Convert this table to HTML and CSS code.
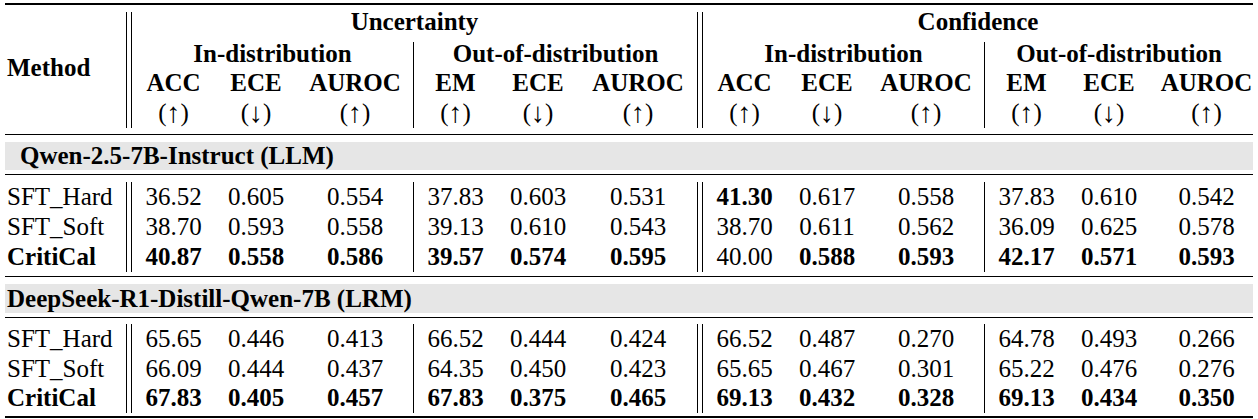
FILE: index.html
```html
<!DOCTYPE html>
<html lang="en">
<head>
<meta charset="utf-8">
<title>Calibration results</title>
<link rel="stylesheet" href="styles.css">
</head>
<body>
<div class="table">
  <div class="rule-heavy"></div>
  <div class="grid head">
    <div class="method">Method</div>
    <div class="dsep dsep-a"></div>
    <div class="grp grp-u">Uncertainty</div>
    <div class="dsep dsep-b"></div>
    <div class="grp grp-c">Confidence</div>
    <div class="sub sub-1">In-distribution</div>
    <div class="sep sep-a"></div>
    <div class="sub sub-2">Out-of-distribution</div>
    <div class="sub sub-3">In-distribution</div>
    <div class="sep sep-b"></div>
    <div class="sub sub-4">Out-of-distribution</div>

    <div class="r3">ACC</div><div class="r3">ECE</div><div class="r3">AUROC</div>
    <div class="r3">EM</div><div class="r3">ECE</div><div class="r3">AUROC</div>
    <div class="r3">ACC</div><div class="r3">ECE</div><div class="r3">AUROC</div>
    <div class="r3">EM</div><div class="r3">ECE</div><div class="r3 e">AUROC</div>

    <div class="r4 arr">(<span class="ar">↑</span>)</div><div class="r4 arr">(<span class="ar">↓</span>)</div><div class="r4 arr">(<span class="ar">↑</span>)</div>
    <div class="r4 arr">(<span class="ar">↑</span>)</div><div class="r4 arr">(<span class="ar">↓</span>)</div><div class="r4 arr">(<span class="ar">↑</span>)</div>
    <div class="r4 arr">(<span class="ar">↑</span>)</div><div class="r4 arr">(<span class="ar">↓</span>)</div><div class="r4 arr">(<span class="ar">↑</span>)</div>
    <div class="r4 arr">(<span class="ar">↑</span>)</div><div class="r4 arr">(<span class="ar">↓</span>)</div><div class="r4 arr e">(<span class="ar">↑</span>)</div>
  </div>
  <div class="rule-light"></div>

  <div class="band band-indent">Qwen-2.5-7B-Instruct (LLM)</div>
  <div class="rule-light"></div>
  <div class="grid body">
    <div class="dsep dsep-a"></div><div class="sep sep-a"></div><div class="dsep dsep-b"></div><div class="sep sep-b"></div>

    <div class="name">SFT_Hard</div>
    <div>36.52</div><div>0.605</div><div>0.554</div>
    <div>37.83</div><div>0.603</div><div>0.531</div>
    <div class="b">41.30</div><div>0.617</div><div>0.558</div>
    <div>37.83</div><div>0.610</div><div class="e">0.542</div>

    <div class="name">SFT_Soft</div>
    <div>38.70</div><div>0.593</div><div>0.558</div>
    <div>39.13</div><div>0.610</div><div>0.543</div>
    <div>38.70</div><div>0.611</div><div>0.562</div>
    <div>36.09</div><div>0.625</div><div class="e">0.578</div>

    <div class="name b">CritiCal</div>
    <div class="b">40.87</div><div class="b">0.558</div><div class="b">0.586</div>
    <div class="b">39.57</div><div class="b">0.574</div><div class="b">0.595</div>
    <div>40.00</div><div class="b">0.588</div><div class="b">0.593</div>
    <div class="b">42.17</div><div class="b">0.571</div><div class="b e">0.593</div>
  </div>
  <div class="rule-light"></div>

  <div class="band band-second">DeepSeek-R1-Distill-Qwen-7B (LRM)</div>
  <div class="rule-light"></div>
  <div class="grid body body-last">
    <div class="dsep dsep-a"></div><div class="sep sep-a"></div><div class="dsep dsep-b"></div><div class="sep sep-b"></div>

    <div class="name">SFT_Hard</div>
    <div>65.65</div><div>0.446</div><div>0.413</div>
    <div>66.52</div><div>0.444</div><div>0.424</div>
    <div>66.52</div><div>0.487</div><div>0.270</div>
    <div>64.78</div><div>0.493</div><div class="e">0.266</div>

    <div class="name">SFT_Soft</div>
    <div>66.09</div><div>0.444</div><div>0.437</div>
    <div>64.35</div><div>0.450</div><div>0.423</div>
    <div>65.65</div><div>0.467</div><div>0.301</div>
    <div>65.22</div><div>0.476</div><div class="e">0.276</div>

    <div class="name b">CritiCal</div>
    <div class="b">67.83</div><div class="b">0.405</div><div class="b">0.457</div>
    <div class="b">67.83</div><div class="b">0.375</div><div class="b">0.465</div>
    <div class="b">69.13</div><div class="b">0.432</div><div class="b">0.328</div>
    <div class="b">69.13</div><div class="b">0.434</div><div class="b e">0.350</div>
  </div>
  <div class="rule-heavy"></div>
</div>
</body>
</html>
```

FILE: styles.css
```css
html, body {
  margin: 0;
  padding: 0;
  background: #ffffff;
}

body {
  font-family: "Liberation Serif", "Times New Roman", Times, serif;
  font-size: 25px;
  color: #000000;
}

.table {
  width: 1248px;
  margin: 3px 5px 0 5px;
}

.rule-heavy {
  height: 2px;
  background: #000000;
}

.rule-light {
  height: 1px;
  background: #000000;
}

.grid {
  display: grid;
  grid-template-columns: 121px 6px 83px 82px 116px 1px 83px 82px 118px 6px 83px 82px 116px 1px 83px 82px 103px;
  text-align: center;
  white-space: nowrap;
}

/* header */
.head {
  grid-template-rows: 32px 29px 30px 30px;
  padding: 2px 0 6px 0;
  line-height: 30px;
  font-weight: bold;
}

.method {
  grid-column: 1;
  grid-row: 1 / -1;
  align-self: center;
  text-align: left;
  padding-left: 2px;
}

.dsep {
  grid-row: 1 / -1;
  border-left: 1px solid #000000;
  border-right: 1px solid #000000;
}

.dsep-a { grid-column: 2; }
.dsep-b { grid-column: 10; }

.sep {
  grid-row: 1 / -1;
  background: #000000;
}

.sep-a { grid-column: 6; }
.sep-b { grid-column: 14; }

.head .dsep {
  margin-top: 5px;
}

.head .sep {
  grid-row: 2 / -1;
  margin-top: 3px;
}

.grp { grid-row: 1; }
.grp-u { grid-column: 3 / 10; }
.grp-c { grid-column: 11 / 18; }

.sub { grid-row: 2; }
.sub-1 { grid-column: 3 / 6; }
.sub-2 { grid-column: 7 / 10; }
.sub-3 { grid-column: 11 / 14; }
.sub-4 { grid-column: 15 / 18; }

.r3 { grid-row: 3; }
.r4 { grid-row: 4; }

.arr {
  font-weight: normal;
}

.ar {
  display: inline-block;
  font-size: 1.12em;
  line-height: 1;
  vertical-align: -1px;
}

.e {
  padding-left: 10px;
}

/* group bands */
.band {
  margin: 7px 0 4px 0;
  height: 28px;
  line-height: 28px;
  background: #e6e6e6;
  font-weight: bold;
  padding-left: 2px;
}

.band-indent {
  padding-left: 15px;
}

.band-second {
  height: 29px;
  line-height: 29px;
}

/* body rows */
.body {
  grid-template-rows: repeat(3, 30px);
  padding: 7px 0 4px 0;
  line-height: 30px;
}

.body-last {
  grid-template-rows: repeat(3, 29.5px);
  padding: 6px 0 3px 0;
}

.name {
  text-align: left;
  padding-left: 2px;
}

.b {
  font-weight: bold;
}
```
